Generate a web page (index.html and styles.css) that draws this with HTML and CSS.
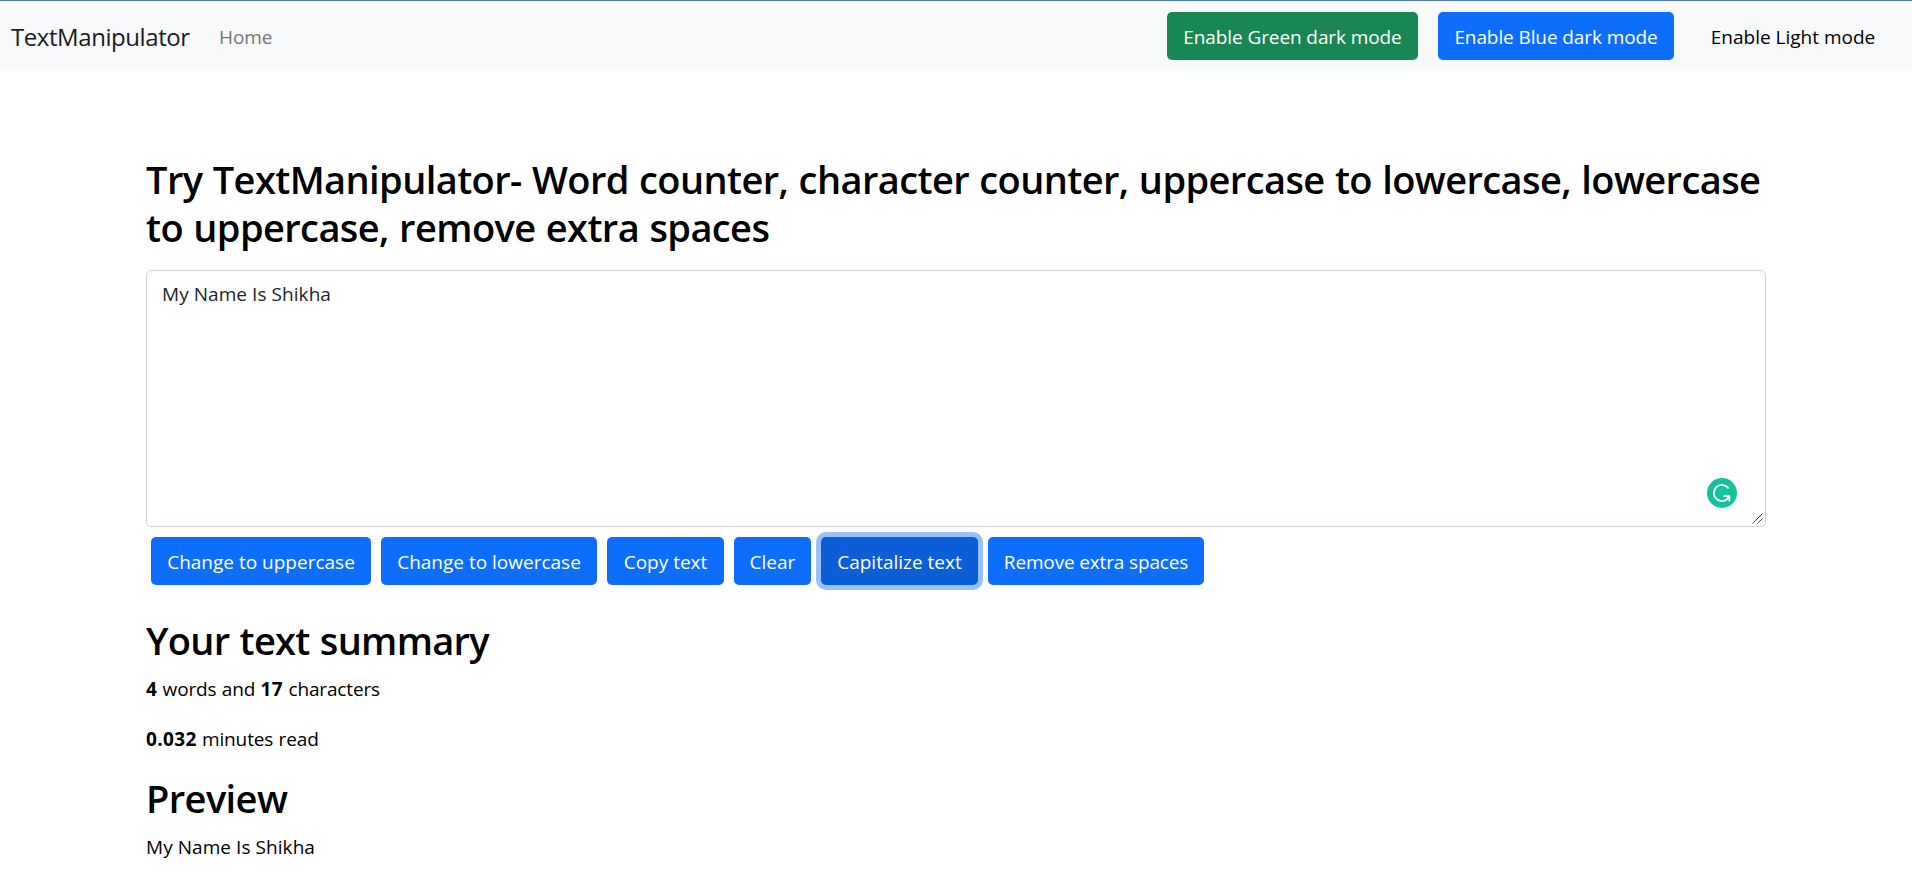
FILE: index.html
```html
<!DOCTYPE html>
<html lang="en">
<head>
<meta charset="utf-8">
<title>TextManipulator</title>
<link rel="stylesheet" href="styles.css">
</head>
<body>
<nav class="navbar">
  <a class="brand">TextManipulator</a>
  <a class="nav-link">Home</a>
  <div class="modes">
    <button class="btn btn-success mode-green">Enable Green dark mode</button>
    <button class="btn btn-primary mode-blue">Enable Blue dark mode</button>
    <button class="btn btn-light mode-light">Enable Light mode</button>
  </div>
</nav>
<main class="container">
  <h1 class="heading title">Try TextManipulator- Word counter, character counter, uppercase to lowercase, lowercase<br>to uppercase, remove extra spaces</h1>
  <div class="editor">
    <textarea class="form-control" spellcheck="false">My Name Is Shikha</textarea>
    <svg class="assistant" viewBox="0 0 30 30" aria-hidden="true">
      <circle cx="15" cy="15" r="15" fill="#15c39a"/>
      <path d="M21.6 10.4A8.1 8.1 0 1 0 20.4 21" fill="none" stroke="#fff" stroke-width="1.8"/>
      <path d="M16.6 17.2H23.2V23.6H21.5V20.6L20.4 21.8L19.2 20.6L20.8 18.9H16.6Z" fill="#fff"/>
    </svg>
    <svg class="grip" viewBox="0 0 11 11" aria-hidden="true">
      <path d="M0.5 10.5L10.5 0.5M5.5 10.5L10.5 5.5" fill="none" stroke="#444" stroke-width="1"/>
    </svg>
  </div>
  <div class="actions">
    <button class="btn btn-primary act-upper">Change to uppercase</button>
    <button class="btn btn-primary act-lower">Change to lowercase</button>
    <button class="btn btn-primary act-copy">Copy text</button>
    <button class="btn btn-primary act-clear">Clear</button>
    <button class="btn btn-primary act-cap focused">Capitalize text</button>
    <button class="btn btn-primary act-spaces">Remove extra spaces</button>
  </div>
  <h2 class="heading summary">Your text summary</h2>
  <p class="line counts"><b>4</b> words and <b>17</b> characters</p>
  <p class="line reading"><b>0.032</b> minutes read</p>
  <h2 class="heading preview">Preview</h2>
  <p class="line">My Name Is Shikha</p>
</main>
</body>
</html>
```
FILE: styles.css
```css
* { box-sizing: border-box; }
body {
  margin: 0;
  background: #fff;
  color: #000;
  font-family: "Open Sans", "Noto Sans", sans-serif;
  font-size: 19px;
  line-height: 30px;
}
.navbar {
  display: flex;
  align-items: center;
  height: 71px;
  padding: 0 20px 1px 11px;
  border-top: 1px solid #4a7ab5;
  background: #f8f9fb;
}
.brand { width: 208px; padding-top: 3px; font-size: 24px; letter-spacing: -0.43px; color: #1c1c1c; }
.nav-link { padding-top: 3px; letter-spacing: -0.1px; color: #777; }
.modes { display: flex; gap: 20px; margin-left: auto; }
.btn {
  height: 48px;
  padding: 1px 0 0;
  border: 0;
  border-radius: 5px;
  font: inherit;
  line-height: 48px;
  text-align: center;
  white-space: nowrap;
  color: #fff;
}
.btn-primary { background: #0d6efd; }
.btn-success { background: #198754; }
.btn-light { background: #f8f9fb; color: #000; }
.mode-green { width: 251px; letter-spacing: -0.1px; }
.mode-blue { width: 236px; letter-spacing: -0.1px; }
.mode-light { width: 198px; }
.container { width: 1620px; margin: 0 auto; padding-top: 84px; }
.heading {
  margin: 0 0 10px;
  font-size: 38px;
  font-weight: 600;
  line-height: 48px;
  letter-spacing: -0.59px;
  word-spacing: 1px;
  white-space: nowrap;
}
.title { margin-bottom: 19px; }
.summary { letter-spacing: -0.7px; }
.editor { position: relative; height: 257px; margin-bottom: 10px; }
.form-control {
  display: block;
  width: 100%;
  height: 257px;
  padding: 8px 15px;
  border: 1px solid #ced4da;
  border-radius: 5px;
  background: #fff;
  color: #212529;
  font: inherit;
  letter-spacing: 0.06px;
  resize: none;
  outline: 0;
}
.assistant { position: absolute; right: 29px; bottom: 19px; width: 30px; height: 30px; }
.grip { position: absolute; right: 3px; bottom: 3px; width: 11px; height: 11px; }
.actions { display: flex; gap: 10px; margin: 0 0 31px 5px; }
.act-upper { width: 220px; }
.act-lower { width: 216px; }
.act-copy { width: 117px; }
.act-clear { width: 77px; }
.act-cap { width: 157px; }
.act-spaces { width: 216px; letter-spacing: -0.15px; }
.focused { background: #0b5ed7; box-shadow: 0 0 0 5px #98c1fe; }
.line { margin: 0 0 20px; letter-spacing: 0.06px; }
.counts { letter-spacing: -0.15px; word-spacing: 0.6px; }
.counts b, .reading b { letter-spacing: 0.35px; }
.reading { letter-spacing: -0.12px; word-spacing: 0.5px; }
```
